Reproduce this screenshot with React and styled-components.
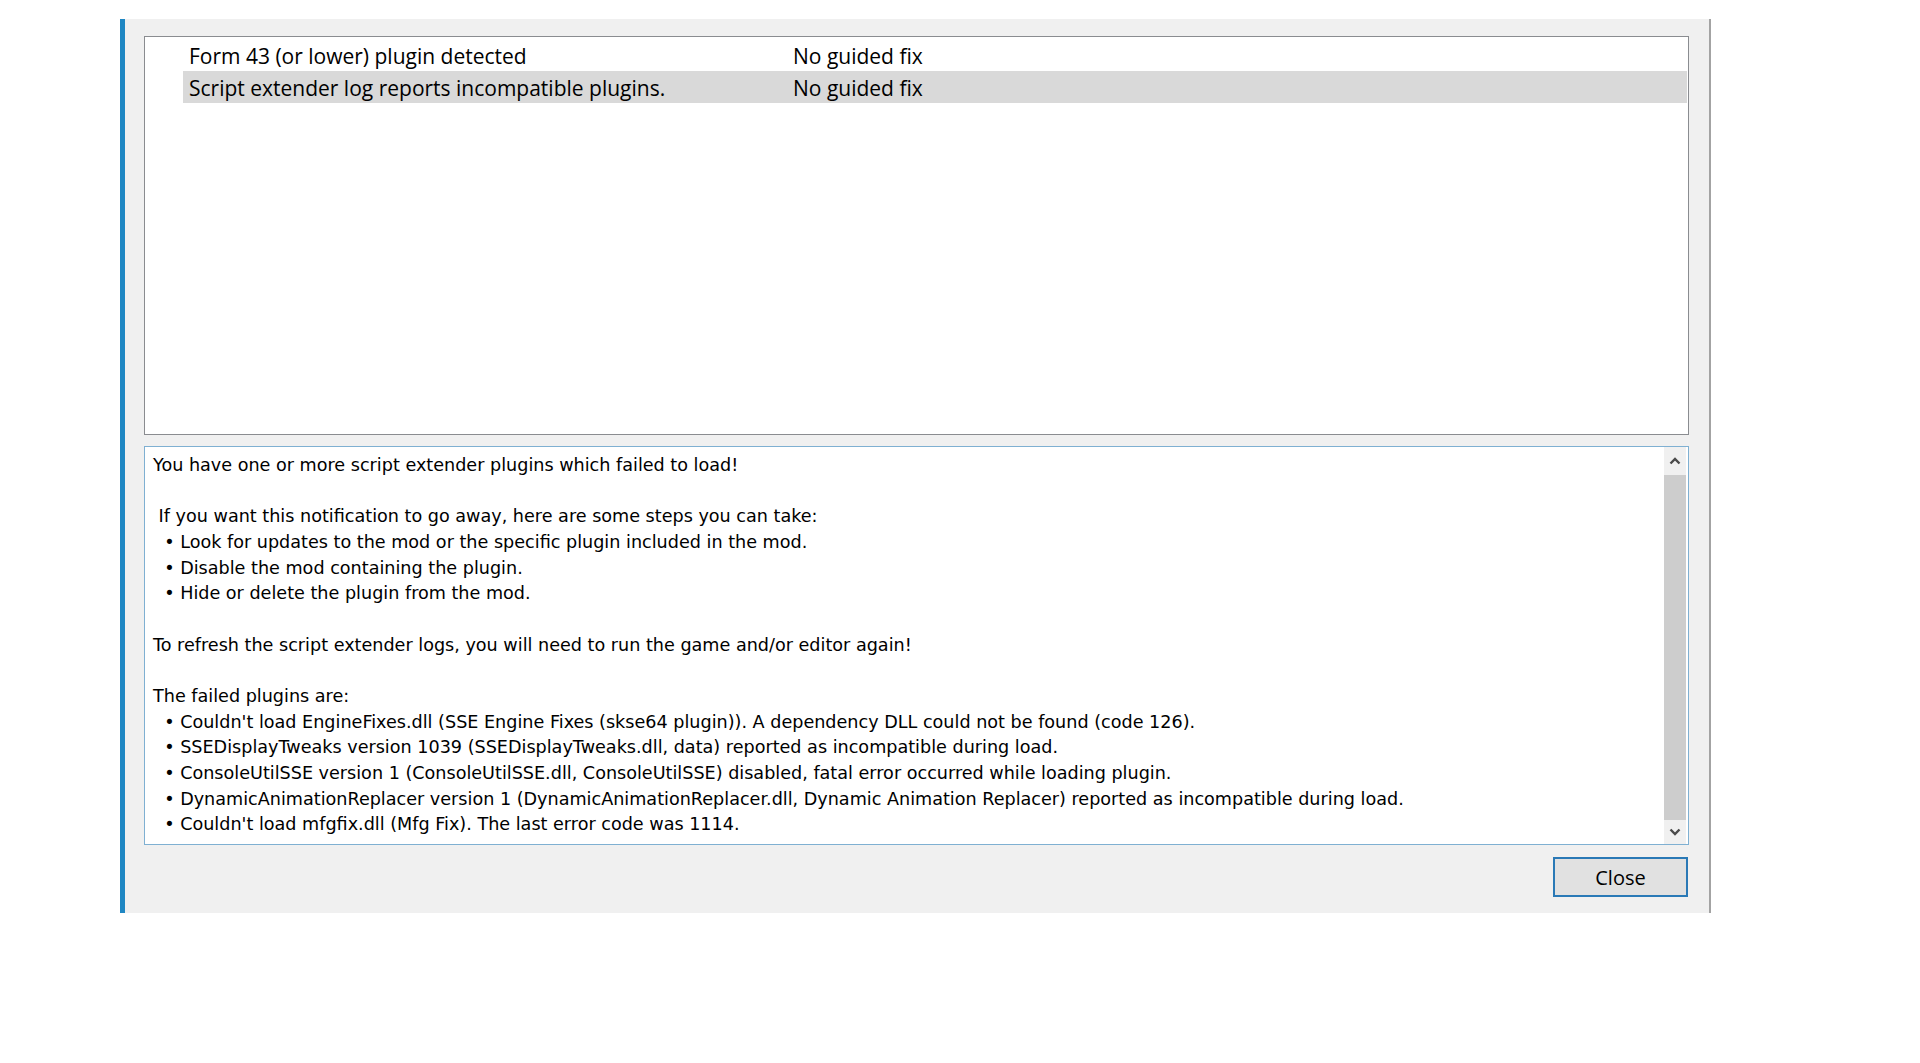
import React from "react";
import styled, { createGlobalStyle } from "styled-components";

const GlobalStyle = createGlobalStyle`
  html, body { margin: 0; padding: 0; background: #ffffff; }
  * { box-sizing: border-box; }
`;

const Page = styled.div`
  padding: 19px 0 0 120px;
  height: 1063px;
  background: #ffffff;
`;

const Dialog = styled.div`
  width: 1591px;
  height: 894px;
  background: #f0f0f0;
  border-left: 5px solid #1f87c3;
  border-right: 2px solid #a3a3a3;
  padding: 17px 20px 16px 19px;
  display: flex;
  flex-direction: column;
`;

const ListBox = styled.div`
  height: 399px;
  flex: none;
  background: #ffffff;
  border: 1px solid #8a8c90;
  padding: 2px 1px 0 38px;
  display: flex;
  flex-direction: column;
`;

const Row = styled.div`
  display: grid;
  grid-template-columns: 604px 1fr;
  height: 32px;
  padding-top: 1px;
  align-items: center;
  background: ${(p) => (p.$selected ? "#d9d9d9" : "transparent")};
  font-family: "Open Sans", "Noto Sans", sans-serif;
  font-size: 21px;
  color: #000000;
`;

const Cell = styled.div`
  padding-left: 6px;
  white-space: nowrap;
`;

const TextBox = styled.div`
  margin-top: 11px;
  height: 399px;
  flex: none;
  background: #ffffff;
  border: 1px solid #7fb0d2;
  display: flex;
`;

const Message = styled.div`
  flex: 1;
  padding: 6px 8px;
  font-family: "DejaVu Sans", Verdana, sans-serif;
  font-size: 17.6px;
  line-height: 25.65px;
  color: #000000;
  white-space: pre;
  overflow: hidden;
`;

const Scrollbar = styled.div`
  width: 22px;
  margin-right: 2px;
  display: flex;
  flex-direction: column;
  background: #f0f0f0;
`;

const ArrowButton = styled.div`
  height: ${(p) => p.$h}px;
  display: flex;
  align-items: center;
  justify-content: center;
  flex: none;
`;

const Thumb = styled.div`
  flex: 1;
  background: #cdcdcd;
`;

const Footer = styled.div`
  margin-top: 12px;
  display: flex;
  justify-content: flex-end;
`;

const Button = styled.button`
  width: 135px;
  height: 40px;
  margin-right: 1px;
  background: #e1e1e1;
  border: 2px solid #2a79b6;
  font-family: "Open Sans", "Noto Sans", sans-serif;
  font-size: 20px;
  color: #000000;
  padding: 0;
  cursor: default;
`;

const Chevron = ({ up }) => (
  <svg width="12" height="8" viewBox="0 0 12 8">
    <polyline
      points={up ? "1.5,6.5 6,2 10.5,6.5" : "1.5,1.5 6,6 10.5,1.5"}
      fill="none"
      stroke="#4a4a4a"
      strokeWidth="2.4"
    />
  </svg>
);

const text = [
  "You have one or more script extender plugins which failed to load!",
  "",
  " If you want this notification to go away, here are some steps you can take:",
  "  \u2022 Look for updates to the mod or the specific plugin included in the mod.",
  "  \u2022 Disable the mod containing the plugin.",
  "  \u2022 Hide or delete the plugin from the mod.",
  "",
  "To refresh the script extender logs, you will need to run the game and/or editor again!",
  "",
  "The failed plugins are:",
  "  \u2022 Couldn't load EngineFixes.dll (SSE Engine Fixes (skse64 plugin)). A dependency DLL could not be found (code 126).",
  "  \u2022 SSEDisplayTweaks version 1039 (SSEDisplayTweaks.dll, data) reported as incompatible during load.",
  "  \u2022 ConsoleUtilSSE version 1 (ConsoleUtilSSE.dll, ConsoleUtilSSE) disabled, fatal error occurred while loading plugin.",
  "  \u2022 DynamicAnimationReplacer version 1 (DynamicAnimationReplacer.dll, Dynamic Animation Replacer) reported as incompatible during load.",
  "  \u2022 Couldn't load mfgfix.dll (Mfg Fix). The last error code was 1114.",
].join("\n");

const rows = [
  { name: "Form 43 (or lower) plugin detected", fix: "No guided fix" },
  { name: "Script extender log reports incompatible plugins.", fix: "No guided fix", selected: true },
];

export default function App() {
  return (
    <Page>
      <GlobalStyle />
      <Dialog>
        <ListBox>
          {rows.map((r) => (
            <Row key={r.name} $selected={r.selected}>
              <Cell>{r.name}</Cell>
              <Cell>{r.fix}</Cell>
            </Row>
          ))}
        </ListBox>
        <TextBox>
          <Message>{text}</Message>
          <Scrollbar>
            <ArrowButton $h={28}>
              <Chevron up />
            </ArrowButton>
            <Thumb />
            <ArrowButton $h={24}>
              <Chevron />
            </ArrowButton>
          </Scrollbar>
        </TextBox>
        <Footer>
          <Button>Close</Button>
        </Footer>
      </Dialog>
    </Page>
  );
}
